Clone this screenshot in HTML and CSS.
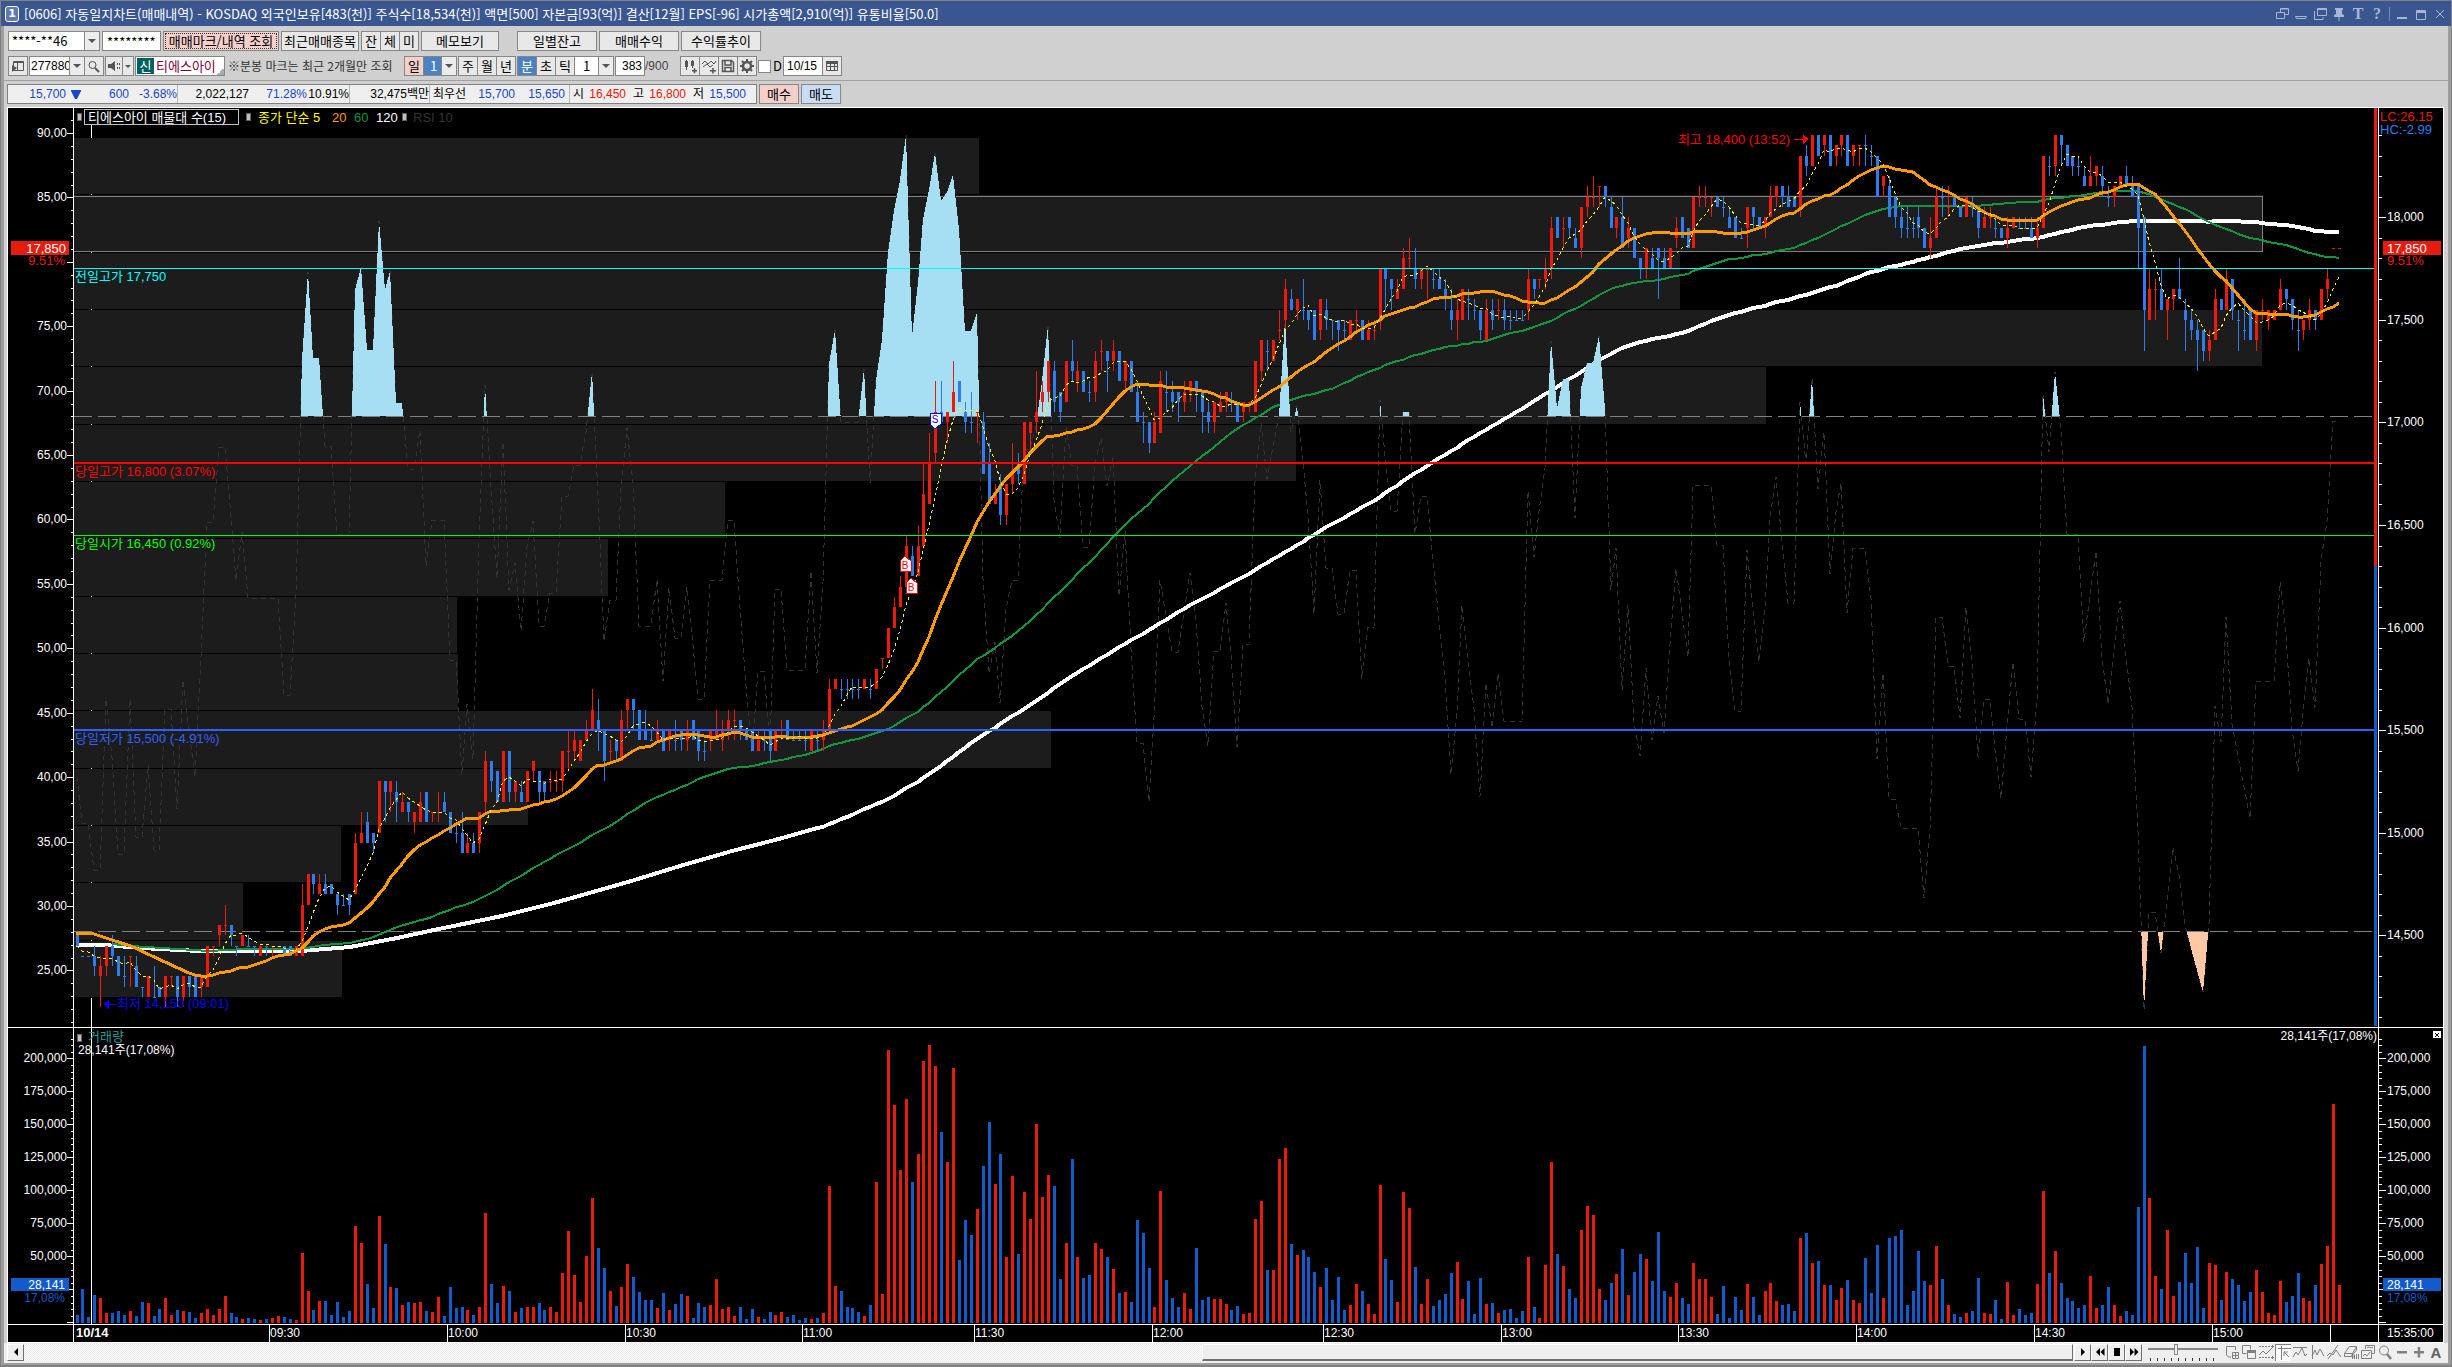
FILE: index.html
```html
<!DOCTYPE html>
<html lang="ko">
<head>
<meta charset="utf-8">
<title>[0606] 자동일지차트(매매내역)</title>
<link rel="stylesheet" href="styles.css">
</head>
<body>
<div class="window">
  <header class="titlebar">
    <span class="win-no">1</span>
    <h1>[0606] 자동일지차트(매매내역) - KOSDAQ 외국인보유[483(천)] 주식수[18,534(천)] 액면[500] 자본금[93(억)] 결산[12월] EPS[-96] 시가총액[2,910(억)] 유통비율[50.0]</h1>
    <div class="win-tools">
      <button aria-label="링크"><svg viewBox="0 0 14 14"><path d="M5.500 5V1.500h8v6H9.500M5 2h8M1.500 5.500h8v6h-8z"/></svg></button>
      <button aria-label="접기"><svg viewBox="0 0 14 14"><path d="M1.500 9.500h11l-1 2h-9z"/></svg></button>
      <button aria-label="복제"><svg viewBox="0 0 14 14"><path d="M4.500 1.500h9v7h-9zM5 2.500h8M1.500 4v8.500H10v-2"/></svg></button>
      <button aria-label="고정"><svg viewBox="0 0 14 14"><path class="solid" d="M3 1h8v2h-1v4l2 1v2H2V8l2-1V3H3zM6.500 10h1v4h-1z"/></svg></button>
      <button class="serif">T</button>
      <button class="serif">?</button>
      <i></i>
      <button aria-label="최소화"><svg viewBox="0 0 14 14"><path class="solid" d="M2 10h10v2H2z"/></svg></button>
      <button aria-label="최대화"><svg viewBox="0 0 14 14"><path d="M2.500 3.500h9v9h-9zM2 4.500h10M2 5.500h10"/></svg></button>
      <button aria-label="닫기"><svg viewBox="0 0 14 14"><path d="M3 3l8 8M11 3l-8 8"/></svg></button>
    </div>
  </header>

  <main class="client">
    <div class="toolbar row-account">
      <span class="combo w92"><select aria-label="계좌번호"><option>****-**46</option></select></span>
      <input class="field w59" type="text" value="********" aria-label="비밀번호">
      <button class="btn pink focus w116">매매마크/내역 조회</button>
      <button class="btn w78">최근매매종목</button>
      <span class="group"><button class="btn w20">잔</button><button class="btn w20">체</button><button class="btn w20">미</button></span>
      <button class="btn w78">메모보기</button>
      <span class="group wide"><button class="btn w80">일별잔고</button><button class="btn w80">매매수익</button><button class="btn w80">수익률추이</button></span>
    </div>

    <div class="toolbar row-symbol">
      <button class="btn w20" aria-label="목록"><svg viewBox="0 0 16 16"><path d="M3.500 8V3.500h10v9h-10M3 4.500h10M7.500 5v8"/><path class="solid" d="M2 7l5 3-5 4z"/></svg></button>
      <span class="group"><span class="combo w56"><select class="tight" aria-label="종목코드"><option>277880</option></select></span><button class="btn w20" aria-label="검색"><svg viewBox="0 0 16 16"><circle cx="6.500" cy="7" r="3.500"/><path d="M9 10l4 4" stroke-width="2"/></svg></button></span>
      <span class="group"><button class="btn w18" aria-label="소리"><svg viewBox="0 0 16 16"><path class="solid" d="M2 6h3l4-3v10l-4-3H2z"/><path d="M11.500 5v2M11.500 9v2M13.500 5v2M13.500 9v2"/></svg></button><button class="btn w12" aria-label="소리 설정"><svg viewBox="0 0 10 10"><path class="solid" d="M2 4h6L5 7z"/></svg></button></span>
      <span class="symbol"><b>신</b>티에스아이</span>
      <span class="note">※분봉 마크는 최근 2개월만 조회</span>
      <span class="group"><button class="btn pink w20">일</button><span class="combo blue w34"><select aria-label="일 주기"><option>1</option></select></span></span>
      <span class="group"><button class="btn w20">주</button><button class="btn w20">월</button><button class="btn w20">년</button></span>
      <span class="group"><button class="btn on w20">분</button><button class="btn w20">초</button><button class="btn w20">틱</button><span class="combo mid w40"><select aria-label="분 주기"><option>1</option></select></span></span>
      <span class="count"><input class="field w30 right" type="text" value="383" aria-label="봉 개수"><span>/900</span></span>
      <span class="group">
        <button class="btn w20" aria-label="봉 추가"><svg viewBox="0 0 16 16"><path d="M4.500 2v10M10.500 2v8"/><path class="solid" d="M3 3h3v6H3zM9 3h3v5H9zM10 12h5v1.500h-5zM11.700 10.200h1.600v5h-1.600z"/></svg></button><button class="btn w20" aria-label="지표 추가"><svg viewBox="0 0 16 16"><path d="M1 6l3-3 3 3 3-3 3 3 2-3M2 9l4-3 3 3 3-2"/><path class="solid" d="M9 12h6v1.500H9zM11.200 10h1.600v5.500h-1.600z"/></svg></button><button class="btn w20" aria-label="저장"><svg viewBox="0 0 16 16"><path d="M2.500 2.500h9l2 2v9h-11zM5 3v4h6V3M5 13.500v-4h6v4" stroke-width="1.500"/></svg></button><button class="btn w20" aria-label="설정"><svg viewBox="0 0 16 16"><circle cx="8" cy="8" r="4" stroke-width="2.500"/><path d="M8 1v3M8 12v3M1 8h3M12 8h3M3 3l2 2M11 11l2 2M13 3l-2 2M5 11l-2 2" stroke-width="2"/></svg></button>
      </span>
      <label class="tick"><input type="checkbox">D</label>
      <span class="group"><input class="field tight w40" type="text" value="10/15" aria-label="날짜"><button class="btn w20" aria-label="달력"><svg viewBox="0 0 16 16"><path d="M2.500 4.500h11v8h-11zM6.500 5v8M10.500 5v8M3 8.500h10"/><path class="solid" d="M2 3h12v3H2z"/></svg></button></span>
    </div>

    <div class="toolbar row-quote">
      <div class="quote">
        <span class="down r w58">15,700</span><span class="down arrow"><svg viewBox="0 0 10 10"><path class="solid" d="M0 1h10v1L6 10H4L0 2z"/></svg></span><span class="down r w48">600</span><span class="down r w48">-3.68%</span>
        <span class="sep"></span>
        <span class="r w68">2,022,127</span><span class="down r w58">71.28%</span><span class="r w42">10.91%</span>
        <span class="sep"></span>
        <span class="r w76">32,475백만</span>
        <span class="sep"></span>
        <span class="w36">최우선</span><span class="down r w46">15,700</span><span class="down r w50">15,650</span>
        <span class="gap"></span><span class="sep"></span>
        <span>시</span><span class="up r w42">16,450</span><span class="lab">고</span><span class="up r w42">16,800</span><span class="lab">저</span><span class="down r w42">15,500</span>
      </div>
      <button class="btn pink w40">매수</button>
      <button class="btn sky w40">매도</button>
    </div>

    <div class="chart"><svg id="chart" role="img" aria-label="티에스아이 분봉 차트"></svg></div>

    <footer class="footer">
      <button class="sb" aria-label="왼쪽"><svg viewBox="0 0 10 10"><path class="solid" d="M7 1v8L3 5z"/></svg></button>
      <div class="track"><span class="thumb"></span></div>
      <button class="sb" aria-label="재생"><svg viewBox="0 0 10 10"><path class="solid" d="M3 1l4 4-4 4z"/></svg></button>
      <button class="sb" aria-label="뒤로"><svg viewBox="0 0 10 10"><path class="solid" d="M5 1v8L1 5zM9.500 1v8l-4-4z"/></svg></button>
      <button class="sb" aria-label="정지"><svg viewBox="0 0 10 10"><path class="solid" d="M2 1h6v8H2z"/></svg></button>
      <button class="sb" aria-label="앞으로"><svg viewBox="0 0 10 10"><path class="solid" d="M1 1v8l4-4zM5.500 1v8l4-4z"/></svg></button>
      <input class="speed" type="range" min="0" max="10" value="4" aria-label="재생 속도">
      <div class="draw">
        <button aria-label="창 분할"><svg viewBox="0 0 16 16"><path d="M7 13H4.500l-2-2V2.500h9V6M8.500 8.500h6v6h-6zM11.500 9v5M9 11.500h5"/></svg></button>
        <button aria-label="겹치기"><svg viewBox="0 0 16 16"><path d="M5.500 9.500h-4v-8h8v4M6.500 6.500h8v8h-8z"/><path class="solid" d="M6 6h9v3H6z"/></svg></button>
        <button aria-label="영역"><svg viewBox="0 0 16 16"><path d="M1 2.500h11M1 13.500h11" stroke-dasharray="2 1"/><path d="M1 11l4-4 3 3 6-6M14.500 1v3M14.500 12v3M13 2.500h3M13 13.500h3"/></svg></button>
        <button class="pressed" aria-label="추세선"><svg viewBox="0 0 16 16"><path d="M2 3.500h13M5.500 1v14M8 7l5 5M8 7h4M8 7v4"/></svg></button>
        <button aria-label="수평선"><svg viewBox="0 0 16 16"><path d="M1 3.500h14M1 13l3-5 2 3 4-7 3 8 2-2"/></svg></button>
        <button aria-label="수직선"><svg viewBox="0 0 16 16"><path d="M3.500 1v14M3 12l3-6 2 5 3-6 4 7"/></svg></button>
        <button aria-label="사선"><svg viewBox="0 0 16 16"><path d="M2 15L12 1M1 12l3-3 3 2 3-5 5 7"/></svg></button>
        <button aria-label="모두 지우기"><svg viewBox="0 0 16 16"><path d="M1.500 9.500l5-7h7l-4 7zM1.500 9.500v3h7l1-3M8.500 12l5-6V3M9.500 15v-4h2v4M9.500 13h2M13.500 10v5M15.500 10v5"/></svg></button>
        <button aria-label="차트 복사"><svg viewBox="0 0 16 16"><path d="M5.500 5V1.500h9v8H12M1.500 6.500h10v8h-10zM3 12l2-2 2 2 3-4M7 4l2-1 2 1 2-1"/></svg></button>
        <button aria-label="돋보기"><svg viewBox="0 0 16 16"><circle cx="7" cy="6.500" r="4.500"/><path d="M10 10l4 5" stroke-width="2.500"/></svg></button>
        <button aria-label="축소"><svg viewBox="0 0 16 16"><path class="solid" d="M3 7h10v2.500H3z"/></svg></button>
        <button aria-label="확대"><svg viewBox="0 0 16 16"><path class="solid" d="M3 7h10v2.500H3zM6.700 3h2.500v10.500H6.700z"/></svg></button>
        <button class="auto">A</button>
      </div>
    </footer>
  </main>
</div>
<script src="chart.js"></script>
</body>
</html>
```
FILE: styles.css
```css
* { box-sizing: border-box; }

body {
  margin: 0;
  font: 13px/16px "Noto Sans CJK KR", sans-serif;
  color: #000;
}

button, input, select { font: inherit; color: inherit; margin: 0; }

svg { display: block; fill: none; stroke: currentColor; }
svg .solid { fill: currentColor; stroke: none; }

.window {
  display: flex;
  flex-direction: column;
  min-height: 100vh;
  border: 1px solid #808080;
  border-bottom-width: 2px;
  background: #9e9e9e;
}

/* title bar */
.titlebar {
  display: flex;
  align-items: center;
  height: 25px;
  padding: 0 4px;
  gap: 5px;
  background: #3a5690;
  color: #fff;
}
.titlebar h1 { flex: 1; margin: 0; font-size: 13px; line-height: 25px; font-weight: 400; white-space: nowrap; }
.win-no {
  width: 14px; height: 16px;
  border: 1px solid #fff; border-radius: 3px;
  background: #5f7ab0;
  font: bold 11px/14px "DejaVu Sans", sans-serif;
  text-align: center;
}
.win-tools { display: flex; align-items: center; gap: 5px; color: #a9b6d3; }
.win-tools button { width: 14px; height: 14px; padding: 0; border: 0; background: none; }
.win-tools i { width: 1px; height: 14px; background: #7488b3; }
.win-tools .serif { font: bold 16px/14px "Liberation Serif", serif; }

/* client area */
.client {
  flex: 1;
  display: flex;
  flex-direction: column;
  margin: 0 3px 2px;
  background: #d0d0d0;
}
.toolbar { display: flex; align-items: center; padding-left: 4px; white-space: nowrap; }
.row-account { height: 29px; padding-top: 1px; gap: 2px; }
.row-symbol { height: 26px; padding-bottom: 3px; gap: 1px; border-bottom: 1px solid #a0a0a0; }
.row-quote { height: 26px; gap: 2px; padding-left: 3px; }

.group { display: flex; }
.group > * + * { margin-left: -1px; }
.group.wide { gap: 3px; margin-left: 16px; }

.btn {
  display: flex; align-items: center; justify-content: center;
  height: 20px; padding: 0;
  border: 1px solid #868686;
  background: #e8e8e8;
}
.btn svg { width: 16px; height: 16px; color: #555; }
.btn.pink { background: #f5d0cb; }
.btn.sky { background: #c8def4; }
.btn.on { background: #4a82c4; color: #fff; }
.btn.focus { outline: 1px dotted #333; outline-offset: -3px; }

.field {
  height: 20px; padding: 0 4px;
  border: 1px solid #868686; border-radius: 0;
  background: #fff;
}
.field.right { text-align: right; padding: 0 2px; }

.combo { position: relative; display: block; height: 20px; border: 1px solid #868686; background: #fff; }
.combo select {
  width: 100%; height: 18px; padding: 0 15px 0 3px;
  border: 0; border-radius: 0; background: none; appearance: none;
}
.combo::before {
  content: ""; position: absolute; right: 0; top: 0;
  width: 14px; height: 18px;
  border-left: 1px solid #868686; background: #ececec;
  pointer-events: none;
}
.combo::after {
  content: ""; position: absolute; right: 3px; top: 7px;
  border: 4px solid transparent; border-top-color: #555; border-bottom: 0;
  pointer-events: none;
}
.combo.blue { background: #4a82c4; color: #fff; }
.combo.blue select { padding-left: 6px; }
.combo.mid select { padding-left: 8px; }
.combo .tight, .field.tight { font: 12px/16px "Liberation Sans", sans-serif; padding-left: 1px; padding-right: 0; }
.field.tight { padding-left: 3px; }

.symbol {
  display: flex; align-items: center; gap: 2px;
  width: 90px; height: 20px; padding-left: 1px;
  border: 1px solid #868686;
  background: linear-gradient(135deg, transparent 50%, #aaa 50%) right bottom / 7px 7px no-repeat #fff;
  color: #800040;
}
.symbol b { width: 17px; background: #006060; color: #fff; font-weight: 400; text-align: center; }
.note { width: 177px; padding-left: 2px; color: #333; font-size: 12px; }
.count { display: flex; align-items: center; width: 64px; color: #444; font: 12px/16px "Liberation Sans", sans-serif; }
.count .field { color: #000; }
.tick { display: flex; align-items: center; gap: 2px; width: 24px; }
.tick input { appearance: none; width: 13px; height: 13px; border: 1px solid #868686; background: #fff; }

.quote {
  display: flex; align-items: center;
  width: 750px; height: 20px;
  border: 1px solid #808080; background: #efefef;
  font: 12px/16px "Liberation Sans", "Noto Sans CJK KR", sans-serif;
}
.quote .sep { align-self: stretch; width: 1px; margin-right: 3px; background: #b8b8b8; }
.quote .gap { width: 4px; }
.quote .arrow { width: 15px; padding-left: 5px; }
.quote .arrow svg { width: 10px; height: 10px; }
.quote .lab { width: 18px; text-align: right; }
.down { color: #1548c8; }
.up { color: #e81808; }
.r { text-align: right; }

.w12 { width: 12px; } .w18 { width: 18px; } .w20 { width: 20px; } .w30 { width: 30px; }
.w34 { width: 34px; } .w36 { width: 36px; } .w40 { width: 40px; } .w42 { width: 42px; }
.w46 { width: 46px; } .w48 { width: 48px; } .w50 { width: 50px; } .w56 { width: 56px; }
.w58 { width: 58px; } .w59 { width: 59px; } .w68 { width: 68px; } .w76 { width: 76px; }
.w78 { width: 78px; } .w80 { width: 80px; } .w92 { width: 92px; } .w116 { width: 116px; }

/* chart */
.chart {
  flex: 1; position: relative; min-height: 500px;
  margin: 0 4px 0 3px;
  border: 1px solid #fff;
  background: #000;
}
.chart svg { position: absolute; inset: 0; width: 100%; height: 100%; stroke: none; shape-rendering: crispEdges; }
.chart text { fill: #fff; font: 12px "Liberation Sans", "Noto Sans CJK KR", sans-serif; }
.chart .lbl { font-size: 13px; }
.chart .mark { font-size: 10px; }
.chart .day { font-weight: bold; }

/* scroll bar and drawing tools */
.footer { display: flex; align-items: center; height: 20px; padding: 0 4px 2px 3px; background: #efefef; }
.sb {
  display: flex; align-items: center; justify-content: center;
  width: 17px; height: 17px; padding: 0;
  border: 1px solid; border-color: #fff #707070 #707070 #fff;
  background: #efefef;
}
.sb svg { width: 10px; height: 10px; }
.track {
  flex: 1; display: flex; justify-content: flex-end; height: 17px; margin-right: 1px;
  background: repeating-conic-gradient(#fff 0 25%, #ececec 0 50%) 0 0 / 2px 2px;
}
.thumb { width: 42.5%; border: 1px solid; border-color: #fff #707070 #707070 #fff; border-bottom-width: 2px; background: #efefef; }
.speed {
  appearance: none; width: 70px; height: 17px; margin: 0 6px;
  background:
    repeating-linear-gradient(90deg, #333 0 1px, transparent 1px 7px) 2px 14px / 66px 3px no-repeat,
    linear-gradient(#888, #888) 0 4px / 100% 2px no-repeat;
}
.speed::-webkit-slider-thumb { appearance: none; width: 4px; height: 11px; margin-top: -5px; border: 1px solid #888; background: #efefef; }
.draw { display: flex; gap: 1px; color: #808080; }
.draw button { width: 16px; height: 17px; padding: 0; border: 0; background: none; }
.draw .pressed { background: #fff; border-left: 1px solid #808080; border-top: 1px solid #808080; }
.draw svg { width: 16px; height: 16px; }
.draw .auto { font: bold 15px/17px "Liberation Sans", sans-serif; color: #606060; }
```
FILE: chart.js
```js
// One entry per minute bar: volume, colour (r = up, b = down), body top, body bottom[, high, low].
// Prices are ticks of 50 won above 14,000; volume is in lots of 252.5 shares.
const BARS = (`
22b10,9 100b8,8 16b8,8 82b8,7,9,6 73r7,6,8,3 28r9,7,9,6 28b9,8,10,7 34b8,6 22b6,6,8,5 34r8,8,8,5
19b7,5,8,5 61b5,5,5,4 58r6,4 19b4,4,7,4 40b5,4 73r6,4,6,3 22r6,6,6,5 37b6,4,6,3 34r6,4,6,3 31b6,5,6,4
13b6,4 28r6,5,6,4 40r9,5 22r9,9,9,8 40r11,10,11,9 79r11,11,13,10 28b11,10,11,9 16b9,9,9,8 10r10,9 13b9,9,10,9
10b9,9,9,8 7r9,8 10b9,9,9,8 13r9,9,9,8 19r9,9 16b9,8 10b9,8 7r9,8 208r13,8,15,8 94r16,13
37b16,15,16,14 64r15,14,16,14 64b15,14,16,14 22b15,14 61b14,13,14,12 16b13,13,14,13 34b14,13,14,12 289r19,14,20,14 238r20,19,22,19 115b21,19,22,19
43b20,19,20,18 319r25,20 235b25,24,25,21 106r25,24,25,22 103b24,23,25,21 52r23,22,24,22 61b23,22,23,21 58r22,21,22,20 61r23,21,24,21 34b24,21
31r22,22,22,21 76r22,22,24,21 19b23,22,24,22 106b22,20 43b20,20,21,19 46b20,18,22,18 37r19,18,20,18 22b19,18,20,18 46r22,19,22,18 328r27,23,28,22
115b27,25,27,24 58b26,23 109r28,23 94b28,24,28,23 31r25,24,25,23 43b24,23,25,23 46r26,23 46r27,26,27,25 58b26,24,26,23 37b25,24,25,23
46r25,25,26,24 31r25,25,26,24 148r28,25,28,24 274r28,28,30,26 142r29,28,30,27 61r29,27 199r30,29,31,29 373r32,30,34,30 223b31,30,33,28 163b30,27,30,25
94r28,28,29,27 49b29,28,29,27 106r31,27,32,27 175r33,32,33,30 136b33,32,33,30 91b32,29 67b30,29,32,29 67b29,29,30,29 43r30,29,31,29 88b30,28
37r30,29,30,28 55b29,29,31,28 85b30,29,30,28 79r30,29,31,28 13b31,29 58b30,28,30,27 46b28,28,29,27 52r30,29,30,28 130r30,29,32,29 40r30,29,31,28
46r31,30,32,29 19r31,31,32,29 46b31,30,31,29 10b30,29 40b30,28 16r29,28,30,28 10b29,29,30,28 31b30,28,30,27 22r30,28 31r30,30,31,29
16b31,29 22b29,29,30,29 7b29,29,30,29 13b29,29,30,28 10r30,28 13b29,29,30,28 28r30,29,31,28 409r34,30,35,30 109r35,34 94b34,34,35,33
46b34,34,35,33 43b34,34,35,33 31b34,34,35,33 19r35,34 52b34,34,35,33 421r36,34 85r37,37,37,36 817r40,37 652r42,40,43,40 457r44,42,45,42
670r48,44,49,44 421b47,45,48,45 505r48,45,50,45 784r53,48,56,48 832r56,52,59,52 769r61,57,64,56 571b61,60,64,60 481r61,60,61,58 763r63,61,66,61 187b64,62
307b61,60,62,59 262b60,60,63,59 340r61,61,61,58 469b60,55,61,55 601b56,52,58,52 415r53,52,54,52 505b54,51,55,50 196r54,51,54,50 439r55,54,58,53 205b56,55,57,54
391r60,54 310r60,59,60,57 595r61,60,65,59 376r63,62,64,61 442r66,63,66,62 409b65,62,66,61 130b63,61,63,60 238r66,62 490b66,65,68,64 196r65,64,66,63
133b65,63 142b63,63,64,62 238r66,63,67,62 220r67,67,68,65 196b67,66,67,63 160r67,66,68,65 88b67,64 91r66,64,66,63 61b66,63 307b63,60,64,60
268b60,60,61,58 163b60,58,60,57 46r60,58,61,58 394r64,59,65,59 127b63,63,65,61 73b63,62,64,61 46b63,62,63,60 88r63,62,64,61 40r64,63,64,62 223b64,63,64,61
67b63,61,63,59 76b61,60,62,59 70r62,60,62,59 70r62,61,63,61 55r63,62,63,61 37b62,62,63,61 49b62,60 25r62,61,62,60 28r62,62,62,61 310r66,61
364r68,65,68,64 157b67,67,68,65 157r68,66 490r69,69,71,68 523r73,70,74,69 235b72,71,73,71 202r72,71,72,70 217b71,71,74,70 196b71,70,71,69 151b71,68
106r72,69,72,68 163b71,70,72,69 67b70,70,70,68 136b70,69,70,67 37b69,69,70,68 52r70,68 115r70,70,71,69 94b70,68 55r69,68,70,68 25r69,69,70,68
412r75,70,75,69 190b75,74,75,71 127b74,73,74,71 61r73,72,74,72 391r76,73,77,73 343r76,76,78,75 166b75,74,77,73 55r75,74,75,73 130r75,75,75,72 49b74,74,75,73
67b74,73,75,73 85b73,72,74,71 148b71,70,73,69 181r71,70,72,68 70r73,70 124b72,72,73,70 25b71,71,72,70 133b71,69,71,68 55r71,68,72,68 58b71,70,72,69
28r71,71,72,70 37b71,70,72,69 40b70,70,71,69 13b70,70,71,70 34b70,70,71,70 196r74,71,75,70 46b74,73,74,72 13r74,74,74,73 172r75,74,76,73 481r79,75,80,74
205b80,78 169r79,79,80,77 100b80,79,80,78 73b78,77,79,77 277r81,77,81,76 349r82,81,83,80 322r82,82,84,81 100r83,83,83,81 67b83,82,83,81 118b81,79,82,79
145r80,79,80,78 220b80,77,82,77 82r79,78,80,77 151b79,76 205b76,75,76,74 190r77,75,77,74 124b76,75,77,75 271b77,76,77,72 94b76,75,77,75 76r77,75
118r79,78,80,77 73b80,78 55b79,77 178r82,77 130r82,82,83,81 130r82,82,83,81 76r82,82,82,80 25b82,81 109b81,81,82,80 13b80,79,81,79
76b80,78 37b78,78,79,78 115r81,79,81,77 76b81,80,81,79 22b80,79 94r80,79,80,78 118r82,80,83,80 64r83,82,83,81 52b83,82,83,81 55b82,81,83,81
34b82,81 253r86,81,86,80 268b86,85,87,84 178r88,85 184b88,86 112r88,87,88,86 112b88,85 67r87,86,87,85 103r88,87,88,86 127b88,85
67r87,86,87,85 58r87,87,87,85 193b87,87,88,85 88b86,86,87,85 232b86,82 73r84,83,84,82 253b83,80,84,80 259b82,80,82,79 277b80,79,81,78 52b79,79,81,78
94b79,79,80,78 214b80,79,81,78 124b79,77 112r78,77,80,76 229r82,78,83,78 130b82,82,83,80 52r81,81,83,80 25b82,81 16b81,80 28r82,80
34b81,81,82,80 133b81,79,81,78 28r80,79,81,79 25r80,80,81,79 67b79,79,80,78 10b79,78 121r79,78,80,77 22r80,79 40b79,79,80,79 22b79,79,80,79
28b79,78,80,78 115r79,78,80,77 394r86,79 148b85,85,86,84 214r88,85,88,84 118b88,87,88,85 73b87,85 64b86,85,86,84 43b85,85,86,84 52b84,83,85,83
139r84,83,86,83 43r85,84,85,83 52b84,83,85,82 106b82,82,83,81 52r83,82,83,81 19r84,83 34b84,83,85,83 22b83,82,84,82 346b83,79,83,75 829b80,71,80,67
373r73,70,75,70 139r73,73,74,70 100b73,71,75,71 277r72,71,72,68 79r73,72,73,71 121b73,72,76,72 208b71,70,72,67 118b70,69,71,68 226b69,68,70,65 43b69,67,69,66
178r68,67,69,66 172r72,68,73,68 67b72,71 151r74,71,75,71 130b74,71,74,70 112b70,70,71,67 64b69,69,72,68 91b71,68 157r71,68,71,67 91r71,71,72,70
28r71,70,71,69 22r71,70 124r73,71,74,71 61b73,72,73,71 79b72,70,72,69 148b69,69,71,67 73r70,69,70,68 64r71,70,72,69 112b71,70,71,69 175r73,70
229r74,73,75,72 655r77,77 112r77,77
`).trim().split(/\s+/).map(s => {
  const m = s.match(/^(\d+)([rb])(.+)$/);
  const [top, bottom, high = top, low = bottom] = m[3].split(',').map(Number);
  return { vol: +m[1], up: m[2] === 'r', top, bottom, high, low, close: m[2] === 'r' ? top : bottom };
});

// Opening stretch of the long averages, which depends on the previous session.
const LEAD20 = '76,933 94,934 112,940 131,946 152,956 178,968';
const LEAD60 = '112,944 131,946 209,951 246,949 301,949 324,945 350,943 371,938 397,927 421,920';
const LEAD120 = '76,945 105,945 141,948 199,951 301,951 350,947 397,938 434,930 502,916 554,903 628,882 680,866 732,851 775,840 800,833';

// Right edge of each volume-at-price band, top to bottom.
const PROFILE = [979, 2264, 1681, 2263, 1767, 1297, 725, 608, 457, 458, 1051, 528, 341, 243, 342];
const TIMES = [[269, '09:30'], [447, '10:00'], [625, '10:30'], [802, '11:00'], [974, '11:30'], [1152, '12:00'], [1324, '12:30'], [1502, '13:00'], [1679, '13:30'], [1857, '14:00'], [2035, '14:30'], [2213, '15:00'], [2331, '']];

const RED = '#f01a0c', BLUE = '#2f7cf0', VRED = '#e81c0c', VBLUE = '#125bcb';
const svg = document.getElementById('chart');
let kx = 1, ky = 1, out = [];

const X = x => Math.round((x - 8) * kx);
const Y = y => Math.round((y - 108) * ky);
const barX = i => 76.6 + i * 5.925;
const priceY = t => 1037.9 - t * 10.258;
const rsiY = r => 133 + (90 - r) * 12.883;

const rect = (x, y, x2, y2, fill, extra = '') =>
  out.push(`<rect x="${X(x)}" y="${Y(y)}" width="${Math.max(1, X(x2) - X(x))}" height="${Math.max(1, Y(y2) - Y(y))}" fill="${fill}" ${extra}/>`);
const text = (x, y, s, fill = '#fff', cls = '', anchor = 'start') =>
  out.push(`<text x="${X(x)}" y="${Y(y) + 5}" class="${cls}" text-anchor="${anchor}" style="fill:${fill}">${s}</text>`);
const line = (pts, color, w, extra = '') =>
  out.push(`<polyline points="${pts.map(p => X(p[0]) + ',' + Y(p[1])).join(' ')}" fill="none" stroke="${color}" stroke-width="${w}" stroke-linejoin="round" ${extra}/>`);
const poly = (pts, fill, stroke) =>
  out.push(`<polygon points="${pts.map(p => X(p[0]) + ',' + Y(p[1])).join(' ')}" fill="${fill}" stroke="${stroke}"/>`);
const parse = s => s.split(' ').map(p => p.split(',').map(Number));

function average(n, from = n - 1) {
  const pts = [];
  for (let i = from; i < BARS.length; i++) {
    const part = BARS.slice(Math.max(0, i - n + 1), i + 1);
    pts.push([barX(i), priceY(part.reduce((s, b) => s + b.close, 0) / part.length)]);
  }
  return pts;
}

function rsi(n) {
  let gain = 0.5, loss = 0.75, prev = BARS[0].close;
  return BARS.map(b => {
    const d = b.close - prev;
    prev = b.close;
    gain += (Math.max(d, 0) - gain) / n;
    loss += (Math.max(-d, 0) - loss) / n;
    return 100 * gain / (gain + loss);
  });
}

function draw() {
  kx = svg.clientWidth / 2436;
  ky = svg.clientHeight / 1234;
  out = [];

  // session line and volume profile
  rect(91, 125, 92, 1324, '#fff');
  PROFILE.forEach((right, k) => {
    const top = 138 + k * 57.33;
    rect(74, top, right, top + 56.4, '#1c1c1c');
    rect(74, top + 56.4, right, top + 57.33, '#000');
  });
  for (let k = 1; k < 15; k++) rect(91, 137 + k * 57.33, 92, 138 + k * 57.33, '#fff');
  out.push(`<rect x="${X(74) - 0.5}" y="${Y(196) + 0.5}" width="${X(2264) - X(74)}" height="${Y(251) - Y(196)}" fill="none" stroke="#808080"/>`);

  // RSI
  const r = rsi(10).map((v, i) => [barX(i), rsiY(v)]);
  [416, 931].forEach(y => out.push(`<path d="M${X(74)} ${Y(y) + 0.5}H${X(2375)}" stroke="#808080" stroke-dasharray="18 6"/>`));
  line(r, '#333', 1, 'stroke-dasharray="5 4"');

  line(parse(LEAD120).concat(average(120, 125)), '#fff', 4);
  line(parse(LEAD60).concat(average(60)), '#10963c', 2);

  out.push(`<clipPath id="over"><rect x="0" y="0" width="${svg.clientWidth}" height="${Y(416)}"/></clipPath>`);
  out.push(`<clipPath id="under"><rect x="0" y="${Y(932)}" width="${svg.clientWidth}" height="${Y(1027) - Y(932)}"/></clipPath>`);
  const area = r.map(p => X(p[0]) + ',' + Y(p[1])).join(' ');
  const ends = y => `${X(barX(382))},${Y(y)} ${X(barX(0))},${Y(y)}`;
  out.push(`<polygon clip-path="url(#over)" fill="#a6def4" points="${area} ${ends(600)}"/>`);
  out.push(`<polygon clip-path="url(#under)" fill="#ffc8a4" points="${area} ${ends(800)}"/>`);

  // candles
  BARS.forEach((b, i) => {
    const x = barX(i), c = b.up ? RED : BLUE;
    rect(x, priceY(b.high), x + 1, priceY(b.low), c);
    rect(x - 1, priceY(b.top), x + 2, Math.max(priceY(b.bottom), priceY(b.top) + 1), c);
  });

  line(parse(LEAD20).concat(average(20)), '#ff9a00', 3);
  line(average(5, 0), '#ffff00', 1, 'stroke-dasharray="3 3"');

  // reference price lines
  rect(74, 268, 2375, 269, '#00ffff');
  rect(74, 462, 2375, 464, '#ff0000');
  rect(74, 535, 2375, 536, '#00ff00');
  rect(74, 729, 2375, 731, '#3060ff');
  text(75, 276, '전일고가 17,750', '#00ffff', 'lbl');
  text(75, 471, '당일고가 16,800 (3.07%)', '#ff0000', 'lbl');
  text(75, 543, '당일시가 16,450 (0.92%)', '#00ff00', 'lbl');
  text(75, 738, '당일저가 15,500 (-4.91%)', '#3060ff', 'lbl');

  // day high / low
  text(1791, 139, '최고 18,400 (13:52)', '#ff0000', 'lbl', 'end');
  rect(1795, 139, 1805, 140, '#ff0000');
  poly([[1804, 135], [1810, 139], [1804, 144]], '#ff0000', 'none');
  text(117, 1003, '최저 14,150 (09:01)', '#0000ff', 'lbl');
  rect(108, 1004, 116, 1005, '#0000ff');
  poly([[109, 1000], [103, 1004], [109, 1009]], '#0000ff', 'none');

  // trade marks
  [[905, 556], [911, 578]].forEach(([x, y]) => {
    poly([[x, y], [x + 6, y + 5], [x + 6, y + 15], [x - 5, y + 15], [x - 5, y + 5]], '#fff', '#ff0000');
    text(x, y + 8, 'B', '#ff0000', 'mark', 'middle');
  });
  poly([[935, 429], [941, 424], [941, 413], [930, 413], [930, 424]], '#fff', '#0000ff');
  text(935, 418, 'S', '#0000ff', 'mark', 'middle');

  // legend
  const dot = (x, y) => rect(x, y, x + 4, y + 7, '#c0c0c0', 'stroke="#606060"');
  dot(77, 113); dot(246, 113); dot(402, 113); dot(77, 1034);
  out.push(`<rect x="${X(84) + 0.5}" y="${Y(109) + 0.5}" width="154" height="15" fill="#000" stroke="#c0c0c0"/>`);
  text(88, 117, '티에스아이 매물대 수(15)', '#fff', 'lbl');
  text(258, 117, '종가 단순 5', '#ffff00', 'lbl');
  text(332, 117, '20', '#ff9a00', 'lbl');
  text(354, 117, '60', '#10963c', 'lbl');
  text(376, 117, '120', '#fff', 'lbl');
  text(413, 117, 'RSI 10', '#333', 'lbl');

  // volume
  BARS.forEach((b, i) => rect(barX(i) - 1, 1322.5 - b.vol / 3, barX(i) + 2, 1323, b.up ? VRED : VBLUE));
  text(88, 1036, '거래량', '#2a9c96', 'lbl');
  text(78, 1049, '28,141주(17,08%)');
  text(2378, 1035, '28,141주(17,08%)', '#fff', '', 'end');
  rect(2434, 1031, 2442, 1038, '#fff');
  line([[2436, 1033], [2440, 1037]], '#000', 1);
  line([[2440, 1033], [2436, 1037]], '#000', 1);

  // frame
  rect(8, 1027, 2444, 1028, '#fff');
  rect(8, 1324, 2444, 1325, '#fff');
  rect(73, 108, 74, 1342, '#fff');
  rect(2379, 108, 2380, 1342, '#fff');
  rect(2375, 108, 2378, 566, RED);
  rect(2375, 566, 2378, 1026, VBLUE);
  const tick = (y, major, left, right) => {
    if (left) rect(major ? 67 : 71, y, 73, y + 1, '#fff');
    if (right) rect(2380, y, major ? 2387 : 2383, y + 1, '#fff');
  };
  for (let v = 92; v >= 20; v--) {
    const y = rsiY(v), major = v % 5 === 0 && v > 20;
    if (y > 108 && y < 1026) tick(y, major, true, false);
    if (major && v !== 80) text(67, y - 1, v + ',00', '#fff', '', 'end');
  }
  for (let t = 2; t <= 88; t += 2) {
    const major = t % 10 === 0;
    tick(priceY(t), major, false, true);
    if (major) text(2388, priceY(t) - 1, (14 + t / 20).toFixed(3).replace('.', ','));
  }
  for (let k = 0; k <= 43; k++) {
    const y = 1322.3 - k * 6.6, major = k % 5 === 0;
    tick(y, major, true, true);
    if (major && k >= 10) {
      text(67, y - 1, k * 5 + ',000', '#fff', '', 'end');
      text(2388, y - 1, k * 5 + ',000');
    }
  }

  // current value tags
  rect(11, 241, 69, 255, VRED);
  rect(2384, 241, 2442, 255, VRED);
  text(66, 248, '17,850', '#fff', 'lbl', 'end');
  text(2388, 248, '17,850', '#fff', 'lbl');
  text(65, 260, '9.51%', VRED, 'lbl', 'end');
  text(2388, 260, '9.51%', VRED, 'lbl');
  rect(11, 1278, 69, 1291, VBLUE);
  rect(2384, 1278, 2442, 1291, VBLUE);
  text(65, 1284, '28,141', '#fff', '', 'end');
  text(2388, 1284, '28,141');
  text(65, 1297, '17,08%', VBLUE, '', 'end');
  text(2388, 1297, '17,08%', VBLUE);
  text(2381, 116, 'LC:26.15', VRED, 'lbl');
  text(2381, 129, 'HC:-2.99', BLUE, 'lbl');

  // time axis
  text(76, 1332, '10/14', '#fff', 'lbl day');
  TIMES.forEach(([x, s]) => {
    rect(x, 1325, x + 1, 1342, '#fff');
    if (s) text(x + 1, 1332, s);
  });
  text(2388, 1332, '15:35:00');

  svg.innerHTML = out.join('');
}

new ResizeObserver(draw).observe(svg);
draw();
```
